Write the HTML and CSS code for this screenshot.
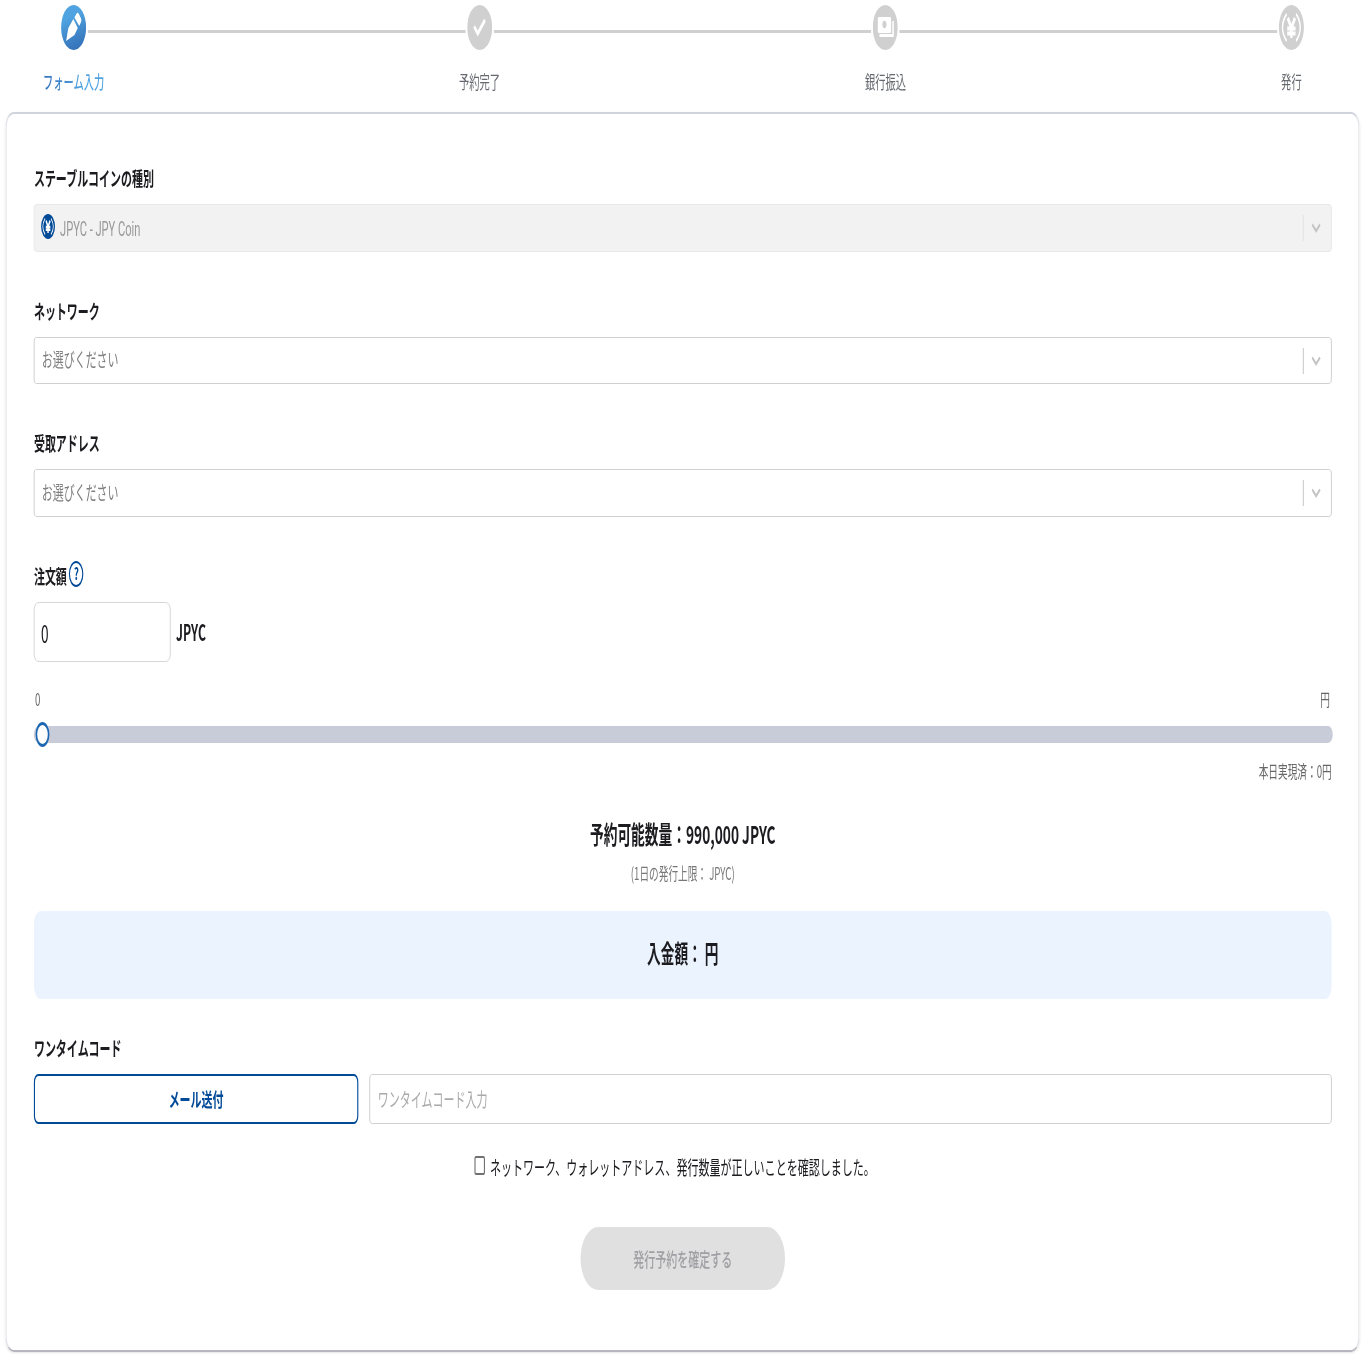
FILE: index.html
```html
<!DOCTYPE html>
<html lang="ja">
<head>
<meta charset="utf-8">
<title>JPYC 発行予約</title>
<link rel="stylesheet" href="styles.css">
</head>
<body>
<div class="viewport">
<div class="page">
  <div class="steps">
    <div class="step active">
      <svg class="badge" viewBox="0 0 45 45"><defs><linearGradient id="blue" x1="0.3" y1="0" x2="0.6" y2="1"><stop offset="0.25" stop-color="#4fa3e0"/><stop offset="1" stop-color="#3470b8"/></linearGradient></defs><circle cx="22.5" cy="22.5" r="22.5" fill="url(#blue)"/><path d="M9 36 13 23 22 14 30 23 24 30ZM24 12.500 28 8.500Q30 7 32 9L35.500 13Q37 15 36 17L32.500 21Z" fill="#fff"/></svg>
      <span class="step-name">フォーム入力</span>
    </div>
    <i class="rail"></i>
    <div class="step">
      <svg class="badge" viewBox="0 0 45 45"><circle cx="22.5" cy="22.5" r="22.5" fill="#d0d0d0"/><path d="M12.500 21.500 19 28.500 32 15" fill="none" stroke="#fff" stroke-width="4"/></svg>
      <span class="step-name">予約完了</span>
    </div>
    <i class="rail"></i>
    <div class="step">
      <svg class="badge" viewBox="0 0 45 45"><circle cx="22.500" cy="22.500" r="22.500" fill="#d0d0d0"/><rect x="9" y="12" width="24" height="16" rx="2" fill="#fff"/><circle cx="21" cy="19.500" r="3.700" fill="#d0d0d0"/><path d="M36.500 16V30.500H12" fill="none" stroke="#fff" stroke-width="2.800"/></svg>
      <span class="step-name">銀行振込</span>
    </div>
    <i class="rail"></i>
    <div class="step">
      <svg class="badge" viewBox="0 0 45 45"><circle cx="22.500" cy="22.500" r="22.500" fill="#d0d0d0"/><g fill="none" stroke="#fff"><path d="M16 13 22.500 23 29 13M22.500 22V33M15 23.500H30M15 28.500H30" stroke-width="4.200"/><path d="M14 9Q-1 22.500 14 36M31 9Q46 22.500 31 36" stroke-width="2.500"/></g></svg>
      <span class="step-name">発行</span>
    </div>
  </div>

  <form class="card">
    <div class="field">
      <div class="label">ステーブルコインの種別</div>
      <div class="select disabled">
        <svg class="coin" viewBox="0 0 45 45"><circle cx="22.500" cy="22.500" r="22.500" fill="#004a98"/><g fill="none" stroke="#fff"><path d="M16 12 22.500 23 29 12M22.500 22V34M15 23.500H30M15 28.500H30" stroke-width="4.600"/><path d="M13 8Q-2 22.500 13 37M32 8Q47 22.500 32 37" stroke-width="2.500"/></g></svg>
        <span class="value latin">JPYC - JPY Coin</span>
        <i class="divider"></i>
        <svg class="chevron" viewBox="0 0 18 10"><path d="M2 1.500 9 8 16 1.500"/></svg>
      </div>
    </div>
    <div class="field">
      <div class="label">ネットワーク</div>
      <div class="select short">
        <span class="value">お選びください</span>
        <i class="divider"></i>
        <svg class="chevron" viewBox="0 0 18 10"><path d="M2 1.500 9 8 16 1.500"/></svg>
      </div>
    </div>
    <div class="field">
      <div class="label">受取アドレス</div>
      <div class="select">
        <span class="value">お選びください</span>
        <i class="divider"></i>
        <svg class="chevron" viewBox="0 0 18 10"><path d="M2 1.500 9 8 16 1.500"/></svg>
      </div>
    </div>
    <div class="field">
      <div class="label">注文額<span class="help">?</span></div>
      <div class="amount"><div class="amount-box">0</div><span class="unit">JPYC</span></div>
    </div>

    <div class="range-labels"><span>0</span><span>円</span></div>
    <div class="slider"><i class="thumb"></i></div>
    <div class="today">本日実現済：0円</div>

    <div class="available">予約可能数量：990,000 JPYC</div>
    <div class="limit">(1日の発行上限： JPYC)</div>
    <div class="total">入金額： 円</div>

    <div class="label code-label">ワンタイムコード</div>
    <div class="code-row">
      <div class="send">メール送付</div>
      <div class="code-input">ワンタイムコード入力</div>
    </div>

    <div class="confirm"><i class="checkbox"></i><span>ネットワーク、ウォレットアドレス、発行数量が正しいことを確認しました。</span></div>
    <div class="submit">発行予約を確定する</div>
  </form>
</div>
</div>
</body>
</html>
```
FILE: styles.css
```css
* { box-sizing: border-box; }
html, body { margin: 0; background: #fff; }
.viewport { width: 1370px; height: 1370px; overflow: hidden; }

/* The form is laid out on a wide sheet and condensed horizontally. */
.page {
  width: 2465px;
  height: 1370px;
  padding: 5px 18px 0 10px;
  transform: scaleX(0.555556);
  transform-origin: 0 0;
  font-family: "Noto Sans CJK JP", sans-serif;
  font-size: 19.8px;
  line-height: 30px;
  color: #1c1c20;
  white-space: nowrap;
}

.steps { display: flex; height: 107px; padding: 0 100px 0 100px; }
.step { width: 45px; display: flex; flex-direction: column; align-items: center; flex: none; }
.badge { width: 45px; height: 45px; flex: none; }
.step-name { margin-top: 16px; font-size: 18.5px; color: #666a70; }
.active .step-name {
  background: linear-gradient(100deg, #3470b8, #4fa3e0 65%);
  background-clip: text;
  color: transparent;
  font-weight: 500;
}
.rail { flex: 1; height: 3px; margin: 25px 3px 0; background: #d0d0d0; }

.card {
  height: 1240px;
  padding: 50px 48px 0 49px;
  border: 2px solid #e2e2e8;
  border-top-color: #d0d5dd;
  border-bottom-color: #b6b6c0;
  border-radius: 15px;
  box-shadow: 0 1px 3px rgba(0, 0, 30, 0.1);
}

.field { margin-bottom: 45px; }
.label { height: 30px; margin-bottom: 10px; display: flex; font-weight: 700; line-height: 28px; }
.select {
  height: 48px;
  display: flex;
  align-items: center;
  padding: 0 18px 0 13px;
  border: 1px solid #c4c4c4;
  border-radius: 5px;
}
.short { height: 47px; }
.value { flex: 1; color: #808080; padding-bottom: 2px; }
.short .value { padding-bottom: 3px; }
.select .latin { font-family: Roboto, sans-serif; font-size: 20px; color: #999; padding: 1px 0 0; }
.disabled { background: #f2f2f2; border-color: #e4e4e4; }
.coin { width: 25px; height: 25px; margin: -3px 9px 0 -1px; }
.divider { width: 2px; height: 26px; background: #ccc; margin-right: 13px; }
.disabled .divider { background: #e4e4e4; }
.chevron { width: 18px; height: 10px; }
.chevron path { fill: none; stroke: #c4c4c4; stroke-width: 3; }

.help {
  width: 26px;
  height: 26px;
  margin: -1px 0 0 4px;
  border: 2.500px solid #004a98;
  border-radius: 50%;
  color: #004a98;
  font: 700 17px/20px "Noto Sans CJK JP", sans-serif;
  text-align: center;
}
.amount { display: flex; align-items: center; height: 60px; }
.amount-box {
  width: 246px;
  height: 60px;
  padding: 0 12px;
  border: 1px solid #ccc;
  border-radius: 8px;
  font-size: 24.6px;
  line-height: 58px;
}
.unit { margin: -2px 0 0 10px; font-size: 22px; font-weight: 700; }

.range-labels { display: flex; justify-content: space-between; margin-top: -23px; padding: 0 3px 0 2px; font-size: 17.400px; color: #666; }
.slider { height: 17px; margin: 12px -2px 0 0; background: #c8ccd8; border-radius: 9px; display: flex; align-items: center; }
.thumb { width: 25px; height: 25px; margin-left: 3px; border: 3px solid #1d66b2; border-radius: 50%; background: #fff; flex: none; }
.today { margin-top: 13px; text-align: right; font-size: 17.400px; color: #666; }

.available { margin-top: 29px; height: 36px; line-height: 36px; text-align: center; font-size: 24.700px; font-weight: 700; }
.limit { margin-top: 7px; text-align: center; font-size: 17.400px; color: #777; }
.total {
  height: 88px;
  margin-top: 23px;
  border-radius: 13px;
  background: #ebf3ff;
  text-align: center;
  font-size: 24.600px;
  font-weight: 700;
  line-height: 82px;
}

.code-label { margin: 34px 0 11px; line-height: 30px; }
.code-row { display: flex; gap: 20px; height: 50px; line-height: 46px; }
.send { width: 584px; border: 2px solid #004a98; border-radius: 8px; color: #004a98; text-align: center; font-weight: 700; }
.code-input { flex: 1; padding: 1px 14px; border: 1px solid #c4c4c4; border-radius: 5px; color: #aaa; }

.confirm { display: flex; align-items: center; margin: 28px 0 0 793px; height: 30px; font-size: 19.850px; }
.checkbox { width: 19px; height: 19px; margin: -4px 9px 0 0; border: 2px solid #707070; border-radius: 3px; }
.submit {
  width: 368px;
  height: 63px;
  margin: 45px auto 0;
  border-radius: 32px;
  background: #e0e0e0;
  color: #a0a0a4;
  text-align: center;
  font-weight: 500;
  line-height: 64px;
}
```
